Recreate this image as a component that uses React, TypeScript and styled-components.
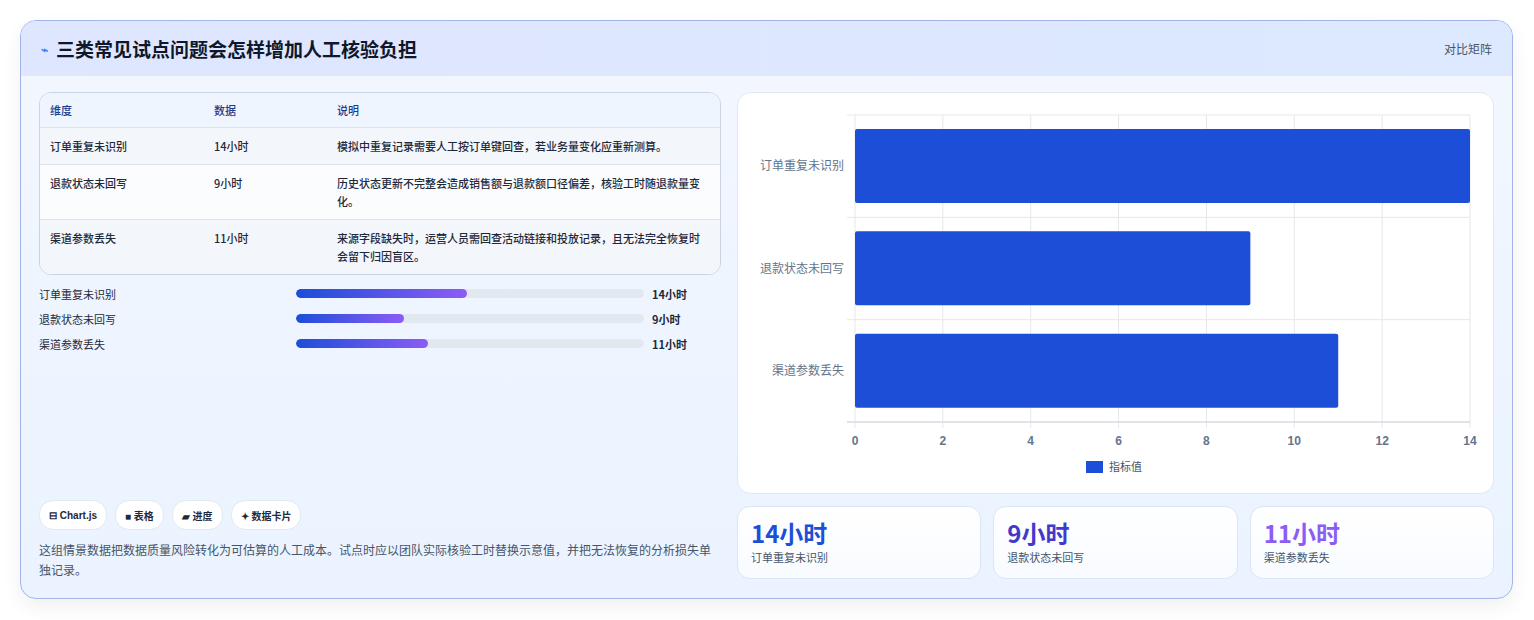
import React from "react";
import styled, { createGlobalStyle } from "styled-components";

const G = createGlobalStyle`
  body{margin:0;background:#fff;font-family:"Noto Sans CJK SC","Noto Sans",sans-serif;}
`;
const Page = styled.div`padding:20px 20px 20px 20px;`;
const Card = styled.div`
  width:1493px;height:579px;box-sizing:border-box;border:1px solid #a5b4e8;border-radius:16px;
  background:linear-gradient(180deg,#f3f7ff,#eaf3ff);overflow:hidden;display:flex;flex-direction:column;
  box-shadow:0 8px 20px rgba(0,0,0,0.06);
`;
const Header = styled.div`
  height:55px;flex:none;display:flex;align-items:center;justify-content:space-between;padding:0 20px 0 20px;
  background:linear-gradient(90deg,#dfe6ff,#dce9ff);
`;
const Title = styled.h1`margin:0;font-size:19px;font-weight:700;color:#0f172a;display:flex;align-items:center;gap:8px;`;
const Tag = styled.span`font-size:12px;color:#475569;`;
const Body = styled.div`flex:1;display:flex;gap:16px;padding:16px 18px 18px 18px;`;
const Left = styled.div`width:684px;display:flex;flex-direction:column;`;
const Right = styled.div`flex:1;display:flex;flex-direction:column;gap:12px;`;
const Table = styled.div`border:1px solid #cbd5e1;border-radius:12px;overflow:hidden;background:#f8fafc;`;
const Row = styled.div<{ head?: boolean; alt?: boolean }>`
  display:grid;grid-template-columns:164px 123px 1fr;padding:${p => p.head ? "8px" : "9px"} 10px;
  font-size:11px;font-weight:${p => p.head ? 500 : 500};line-height:18px;
  color:${p => p.head ? "#1e3a8a" : "#1e293b"};
  background:${p => p.head ? "#eff5ff" : p.alt ? "#fbfcfe" : "#f3f6fa"};
  border-top:${p => p.head ? "none" : "1px solid #dbe2ea"};
  min-height:${p => p.head ? "16px" : "17px"};
`;
const Prog = styled.div`display:grid;grid-template-columns:257px 356px 1fr;align-items:center;gap:0 0;height:25px;font-size:11px;color:#1e293b;`;
const Track = styled.div`height:9px;border-radius:5px;background:#e2e8f0;margin-right:8px;overflow:hidden;`;
const Fill = styled.div`height:100%;border-radius:5px;background:linear-gradient(90deg,#1d4ed8,#8b5cf6);`;
const Val = styled.span`font-weight:700;`;
const Spacer = styled.div`flex:1;`;
const Chips = styled.div`display:flex;gap:8px;`;
const Chip = styled.span`height:28px;padding:0 9px;display:inline-flex;align-items:center;gap:4px;border-radius:14px;background:#fff;border:1px solid #e2e8f0;font-size:10px;font-weight:600;color:#1e293b;font-family:"Liberation Sans","Noto Sans CJK SC",sans-serif;`;
const Note = styled.p`margin:10px 0 0;font-size:12px;line-height:20px;color:#475569;`;
const ChartCard = styled.div`height:402px;box-sizing:border-box;background:#fff;border:1px solid #e2e8f0;border-radius:14px;`;
const Stats = styled.div`display:grid;grid-template-columns:repeat(3,1fr);gap:12px;`;
const Stat = styled.div`height:73px;box-sizing:border-box;padding:10px 13px;background:linear-gradient(180deg,#fff,#f8fbff);border:1px solid #dbe5f3;border-radius:13px;`;
const Big = styled.div<{ c: string }>`font-size:24px;font-weight:700;color:${p => p.c};line-height:32px;`;
const Small = styled.div`font-size:11px;color:#475569;`;

const rows = [
  ["订单重复未识别", "14小时", "模拟中重复记录需要人工按订单键回查，若业务量变化应重新测算。"],
  ["退款状态未回写", "9小时", "历史状态更新不完整会造成销售额与退款额口径偏差，核验工时随退款量变化。"],
  ["渠道参数丢失", "11小时", "来源字段缺失时，运营人员需回查活动链接和投放记录，且无法完全恢复时会留下归因盲区。"],
];
const data = [14, 9, 11];

function Chart() {
  const x0 = 117, x1 = 732, y0 = 22, y1 = 329;
  const sx = (v: number) => x0 + (v / 14) * (x1 - x0);
  const band = (y1 - y0) / 3;
  return (
    <svg width="755" height="400" style={{ display: "block" }} fontFamily="Liberation Sans, Noto Sans CJK SC, sans-serif">
      {[0, 2, 4, 6, 8, 10, 12, 14].map(t => (
        <g key={t}>
          <line x1={sx(t)} x2={sx(t)} y1={y0} y2={y1 + 6} stroke="#e5e7eb" />
          <text x={sx(t)} y={352} fontSize="12" fontWeight="700" fill="#64748b" textAnchor="middle">{t}</text>
        </g>
      ))}
      {[0, 1, 2, 3].map(i => <line key={i} x1={x0 - 8} x2={x1} y1={y0 + band * i} y2={y0 + band * i} stroke="#e5e7eb" />)}
      <line x1={x0 - 8} x2={x1} y1={y1} y2={y1} stroke="#cbd5e1" />
      {data.map((v, i) => (
        <g key={i}>
          <rect x={x0} y={y0 + band * i + 14} width={sx(v) - x0} height={74} rx="2" fill="#1d4ed8" />
          <text x={x0 - 11} y={y0 + band * i + band / 2 + 4} fontSize="12" fill="#64748b" textAnchor="end">{rows[i][0]}</text>
        </g>
      ))}
      <rect x="348" y="368" width="17" height="12" fill="#1d4ed8" />
      <text x="371" y="378" fontSize="11" fill="#475569">指标值</text>
    </svg>
  );
}

export default function App() {
  return (
    <Page>
      <G />
      <Card>
        <Header>
          <Title><span style={{ color: "#3b82f6", fontSize: 12 }}>⌁</span>三类常见试点问题会怎样增加人工核验负担</Title>
          <Tag>对比矩阵</Tag>
        </Header>
        <Body>
          <Left>
            <Table>
              <Row head><span>维度</span><span>数据</span><span>说明</span></Row>
              {rows.map((r, i) => <Row key={i} alt={i === 1}><span>{r[0]}</span><span>{r[1]}</span><span>{r[2]}</span></Row>)}
            </Table>
            <div style={{ height: 6 }} />
            {[49, 31, 38].map((w, i) => (
              <Prog key={i}><span>{rows[i][0]}</span><Track><Fill style={{ width: `${w}%` }} /></Track><Val>{rows[i][1]}</Val></Prog>
            ))}
            <Spacer />
            <Chips>
              <Chip>⊟ Chart.js</Chip><Chip>■ 表格</Chip><Chip>▰ 进度</Chip><Chip>✦ 数据卡片</Chip>
            </Chips>
            <Note>这组情景数据把数据质量风险转化为可估算的人工成本。试点时应以团队实际核验工时替换示意值，并把无法恢复的分析损失单独记录。</Note>
          </Left>
          <Right>
            <ChartCard><Chart /></ChartCard>
            <Stats>
              <Stat><Big c="#1d4ed8">14小时</Big><Small>订单重复未识别</Small></Stat>
              <Stat><Big c="#4338ca">9小时</Big><Small>退款状态未回写</Small></Stat>
              <Stat><Big c="#8b5cf6">11小时</Big><Small>渠道参数丢失</Small></Stat>
            </Stats>
          </Right>
        </Body>
      </Card>
    </Page>
  );
}
